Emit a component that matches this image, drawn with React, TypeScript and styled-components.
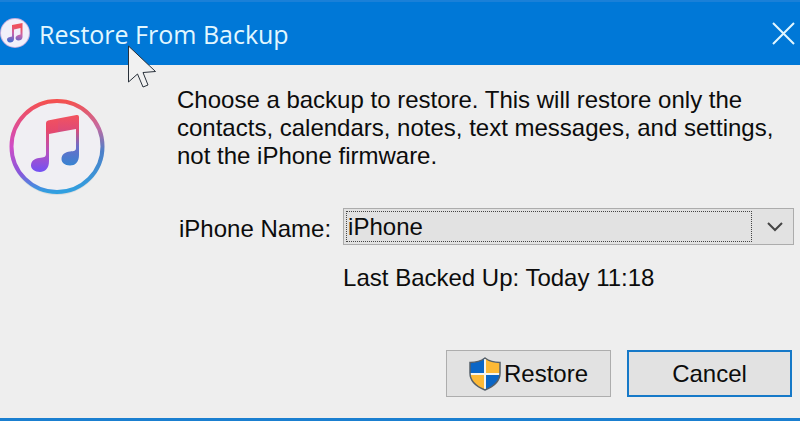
import React from "react";
import styled, { createGlobalStyle } from "styled-components";

const GlobalStyle = createGlobalStyle`
  *, *::before, *::after { box-sizing: border-box; }
  body { margin: 0; background: #eeeeee; }
`;

const Dialog = styled.main`
  display: flex;
  flex-direction: column;
  min-height: 100vh;
  background: #eeeeee;
  color: #0c0c0c;
  border-bottom: 3px solid #1a7fd0;
  font-family: "Liberation Sans", Arial, sans-serif;
  font-size: 24px;
  line-height: 28px;
`;

const TitleBar = styled.header`
  position: relative;
  display: flex;
  align-items: center;
  height: 65px;
  padding: 0 4px 2px 0;
  gap: 8px;
  border-top: 2px solid #1a80d8;
  background: #0078d7;
  color: #e2f7ff;
`;

const Title = styled.h1`
  flex: 1;
  margin: 0;
  padding-top: 2px;
  font-family: "Open Sans", "Segoe UI", sans-serif;
  font-size: 25px;
  font-weight: 400;
  line-height: 32px;
  white-space: nowrap;
`;

const CloseButton = styled.button`
  display: flex;
  padding: 0;
  border: 0;
  background: transparent;
  color: inherit;
`;

const Pointer = styled.svg`
  position: absolute;
  left: 126px;
  top: 42px;
  z-index: 1;
  pointer-events: none;
`;

const Content = styled.div`
  display: flex;
  flex: 1;
  gap: 71px;
  padding: 21px 6px 21px 8px;
`;

const Logo = styled.div`
  display: flex;
  flex: none;
  align-self: flex-start;
  padding-top: 12px;
`;

const Details = styled.form`
  display: flex;
  flex: 1;
  flex-direction: column;
`;

const Message = styled.p`
  margin: 0;
`;

const Fields = styled.div`
  display: grid;
  grid-template-columns: auto 1fr;
  align-items: center;
  gap: 19px 12px;
  margin: 38px 0 32px 2px;
`;

const FieldLabel = styled.label`
  padding-top: 4px;
`;

const Status = styled.output`
  grid-column: 2;
`;

const SelectBox = styled.div`
  position: relative;
  display: flex;
  align-items: center;

  &::after {
    content: "";
    position: absolute;
    inset: 3px 42px 3px 3px;
    border: 1px dotted #444444;
    pointer-events: none;
  }
`;

const Select = styled.select`
  width: 100%;
  height: 37px;
  padding: 0 44px 0 4px;
  appearance: none;
  border: 1px solid #acacac;
  border-radius: 0;
  outline: none;
  background: #e2e2e2;
  color: inherit;
  font: inherit;
`;

const Chevron = styled.svg`
  position: absolute;
  right: 10px;
  pointer-events: none;
`;

const Actions = styled.div`
  display: flex;
  justify-content: flex-end;
  gap: 16px;
  margin-top: auto;
  padding-right: 2px;
`;

const Button = styled.button<{ $primary?: boolean }>`
  display: flex;
  align-items: center;
  justify-content: center;
  gap: 3px;
  width: 165px;
  height: 47px;
  padding: 0;
  border: ${(p) => (p.$primary ? "2px solid #1679c8" : "1px solid #adadad")};
  background: #e2e2e2;
  color: inherit;
  font: inherit;
`;

const Note = ({ fill }: { fill: string }) => (
  <path
    fill={fill}
    d="M38 25Q38 23 40 22.500L68.500 17Q71 16.500 71 19V57C71 64.500 67 67.500 62 67.500C56.500 67.500 53.500 64.500 53.500 61C53.500 56.500 57 54 62 53.500C66 53 68 53 68 50V31L41 36V63C41 70.500 37 74 32 74C26.500 74 23 71 23 67.500C23 63 26.500 60.500 31 60C36 59.500 38 59 38 56Z"
  />
);

const MusicLogo = () => (
  <svg width="98" height="98" viewBox="0 0 98 98" aria-label="iTunes" role="img">
    <defs>
      <linearGradient id="ringLeft" x1="0" y1="0" x2="0" y2="1">
        <stop offset="0" stopColor="#f45150" />
        <stop offset="0.5" stopColor="#d04cc6" />
        <stop offset="0.8" stopColor="#8658dc" />
        <stop offset="1" stopColor="#30a0e0" />
      </linearGradient>
      <linearGradient id="ringRight" x1="0" y1="0" x2="0" y2="1">
        <stop offset="0" stopColor="#f45150" />
        <stop offset="0.28" stopColor="#c66aa0" />
        <stop offset="0.55" stopColor="#4d7fc8" />
        <stop offset="1" stopColor="#30a0e0" />
      </linearGradient>
      <linearGradient id="noteLeft" x1="0" y1="0" x2="0" y2="1">
        <stop offset="0" stopColor="#f4535d" />
        <stop offset="0.28" stopColor="#e6496c" />
        <stop offset="0.65" stopColor="#b650c0" />
        <stop offset="1" stopColor="#7252f4" />
      </linearGradient>
      <linearGradient id="noteRight" x1="0" y1="0" x2="0" y2="1">
        <stop offset="0" stopColor="#f4535d" />
        <stop offset="0.25" stopColor="#df4b76" />
        <stop offset="0.55" stopColor="#6c6dc8" />
        <stop offset="0.9" stopColor="#3585d2" />
      </linearGradient>
      <clipPath id="leftHalf"><path d="M20 10H50V80H20Z" /></clipPath>
      <clipPath id="rightHalf"><path d="M50 10H80V80H50Z" /></clipPath>
    </defs>
    <circle cx="49" cy="50" r="47" fill="#d9dcdf" />
    <circle cx="49" cy="48" r="45" fill="#f0eff3" />
    <path d="M49 3A45.500 45.500 0 0 0 49 94" fill="none" stroke="url(#ringLeft)" strokeWidth="4" />
    <path d="M49 3A45.500 45.500 0 0 1 49 94" fill="none" stroke="url(#ringRight)" strokeWidth="4" />
    <g clipPath="url(#leftHalf)"><Note fill="url(#noteLeft)" /></g>
    <g clipPath="url(#rightHalf)"><Note fill="url(#noteRight)" /></g>
  </svg>
);

const AppIcon = () => (
  <svg width="31" height="32" viewBox="0 0 31 32" aria-hidden="true">
    <defs>
      <linearGradient id="smallNote" x1="0.6" y1="0" x2="0.4" y2="1">
        <stop offset="0.2" stopColor="#ee5260" />
        <stop offset="0.55" stopColor="#c765ad" />
        <stop offset="1" stopColor="#466bce" />
      </linearGradient>
    </defs>
    <circle cx="15" cy="16" r="15" fill="#c4addd" />
    <circle cx="15" cy="16" r="14" fill="#f2f0fa" />
    <path
      fill="url(#smallNote)"
      d="M12 8L22.500 6V20C22.500 22.500 20.500 23.500 18.500 23.500C16.500 23.500 15.500 22 15.500 21C15.500 19 17.500 18 20.500 17.500V11L14 12.500V22C14 24.500 12 25.500 10 25.500C8 25.500 7 24 7 22.500C7 20.500 9 20 12 19.500Z"
    />
  </svg>
);

const Shield = () => (
  <svg width="32" height="34" viewBox="0 0 32 34" aria-hidden="true">
    <defs>
      <clipPath id="shieldShape">
        <path d="M16 1C20 4 25 5.500 31 5.500V16C31 24 25 29.500 16 33C7 29.500 1 24 1 16V5.500C7 5.500 12 4 16 1Z" />
      </clipPath>
    </defs>
    <g clipPath="url(#shieldShape)">
      <path fill="#f4f4f0" d="M0 0H32V34H0Z" />
      <path fill="#0b66c6" d="M0 0H15V16H0ZM17 18H32V34H17Z" />
      <path fill="#fdb936" d="M17 0H32V16H17ZM0 18H15V34H0Z" />
    </g>
    <path
      fill="none"
      stroke="#56606a"
      strokeWidth="1.500"
      d="M16 1C20 4 25 5.500 31 5.500V16C31 24 25 29.500 16 33C7 29.500 1 24 1 16V5.500C7 5.500 12 4 16 1Z"
    />
  </svg>
);

export default function App() {
  return (
    <>
      <GlobalStyle />
      <Dialog>
        <TitleBar>
          <AppIcon />
          <Title>Restore From Backup</Title>
          <CloseButton type="button" aria-label="Close">
            <svg width="24" height="24" viewBox="0 0 24 24" fill="none" stroke="currentColor" strokeWidth="2">
              <path d="M1 2L22 23M22 2L1 23" />
            </svg>
          </CloseButton>
          <Pointer width="32" height="46" viewBox="0 0 32 46" aria-hidden="true">
            <path
              d="M2.500 2V38L11.500 30L17 43L22 41L17 28.500L29.500 27.500Z"
              fill="#f1f1f1"
              stroke="#28303a"
              strokeWidth="1"
            />
          </Pointer>
        </TitleBar>
        <Content>
          <Logo>
            <MusicLogo />
          </Logo>
          <Details onSubmit={(e) => e.preventDefault()}>
            <Message>
              Choose a backup to restore. This will restore only the contacts, calendars, notes, text
              messages, and settings, not the iPhone firmware.
            </Message>
            <Fields>
              <FieldLabel htmlFor="backup">iPhone Name:</FieldLabel>
              <SelectBox>
                <Select id="backup" defaultValue="iPhone">
                  <option>iPhone</option>
                </Select>
                <Chevron width="18" height="12" viewBox="0 0 18 12" fill="none" stroke="#454545" strokeWidth="2">
                  <path d="M2 2L9 9L16 2" />
                </Chevron>
              </SelectBox>
              <Status htmlFor="backup">Last Backed Up: Today 11:18</Status>
            </Fields>
            <Actions>
              <Button type="submit">
                <Shield />
                Restore
              </Button>
              <Button type="button" $primary>
                Cancel
              </Button>
            </Actions>
          </Details>
        </Content>
      </Dialog>
    </>
  );
}
